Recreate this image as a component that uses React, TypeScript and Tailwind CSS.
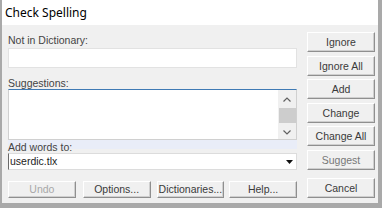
import type { ReactNode } from 'react';

interface BtnProps {
  children: ReactNode;
  className?: string;
  muted?: boolean;
  disabled?: boolean;
}

function Btn({ children, className = '', muted = false, disabled = false }: BtnProps) {
  const tone = disabled ? 'text-[#a8a8a8]' : muted ? 'text-[#777777]' : 'text-[#3a3a3a]';
  return (
    <div
      className={`flex items-center justify-center bg-[#f0f0f0] border border-t-white border-l-white border-r-[#8f8f8f] border-b-[#8f8f8f] shadow-[inset_-1px_-1px_0_#cfcfcf] ${tone} ${className}`}
    >
      {children}
    </div>
  );
}

export default function App() {
  return (
    <div className="w-[382px] h-[208px] bg-[#a9a9a9] pl-[2px] pr-[4px] pb-[5px] flex flex-col font-['Liberation_Sans',sans-serif] text-[10.5px] leading-[13px]">
      {/* Title bar */}
      <div className="h-[25px] bg-white pl-[3px] flex items-center font-['Noto_Sans',sans-serif] text-[12px] text-black">
        Check Spelling
      </div>

      {/* Body */}
      <div className="flex-1 bg-[#f0f0f0] flex pl-[6px]">
        <div className="w-[289px] flex flex-col pt-[9px]">
          <div className="h-[13px] text-[#444444]">Not in Dictionary:</div>
          <div className="mt-[1px] h-[20px] bg-white border border-[#e2e2e2]" />

          <div className="mt-[9px] h-[12px] text-[#444444]">Suggestions:</div>
          <div className="h-[51px] bg-white border border-[#d0d0d0] border-t-[#3f7ab4] flex justify-end">
            <div className="w-[18px] bg-[#f0f0f0] flex flex-col items-center">
              <svg width="10" height="7" viewBox="0 0 10 7" className="mt-[6px]">
                <path d="M1.5 5.5 L5 2 L8.5 5.5" fill="none" stroke="#606060" strokeWidth="1.2" />
              </svg>
              <div className="mt-[5px] w-[17px] h-[15px] bg-[#cdcdcd]" />
              <svg width="10" height="7" viewBox="0 0 10 7" className="mt-[6px]">
                <path d="M1.5 1.5 L5 5 L8.5 1.5" fill="none" stroke="#606060" strokeWidth="1.2" />
              </svg>
            </div>
          </div>

          <div className="h-[13px] text-[#444444] bg-[linear-gradient(#e9edf8_9px,transparent_9px)] pt-[1px] leading-[12px]">
            Add words to:
          </div>
          <div className="h-[17px] bg-white border border-[#dcdcdc] border-l-[#6a6a6a] flex items-center justify-between pl-[1px] text-[#222222]">
            <span className="leading-[13px]">userdic.tlx</span>
            <div className="w-[14px] h-full flex items-center justify-center">
              <svg width="7" height="4" viewBox="0 0 7 4">
                <path d="M0 0 H7 L3.5 4 Z" fill="#111" />
              </svg>
            </div>
          </div>

          <div className="mt-[11px] flex h-[17px]">
            <Btn className="w-[68px]" disabled>
              Undo
            </Btn>
            <Btn className="w-[68px] ml-[7px]">Options...</Btn>
            <Btn className="w-[68px] ml-[6px]">Dictionaries...</Btn>
            <Btn className="w-[68px] ml-[5px]">Help...</Btn>
          </div>
        </div>

        <div className="ml-[10px] w-[68px] flex flex-col pt-[7px]">
          <Btn className="h-[20px]">Ignore</Btn>
          <Btn className="h-[20px] mt-[4px]">Ignore All</Btn>
          <Btn className="h-[20px] mt-[3px]">Add</Btn>
          <Btn className="h-[20px] mt-[4px]">Change</Btn>
          <Btn className="h-[20px] mt-[3px]">Change All</Btn>
          <Btn className="h-[20px] mt-[4px]" muted>
            Suggest
          </Btn>
          <Btn className="h-[20px] mt-[8px]">Cancel</Btn>
        </div>
      </div>
    </div>
  );
}
